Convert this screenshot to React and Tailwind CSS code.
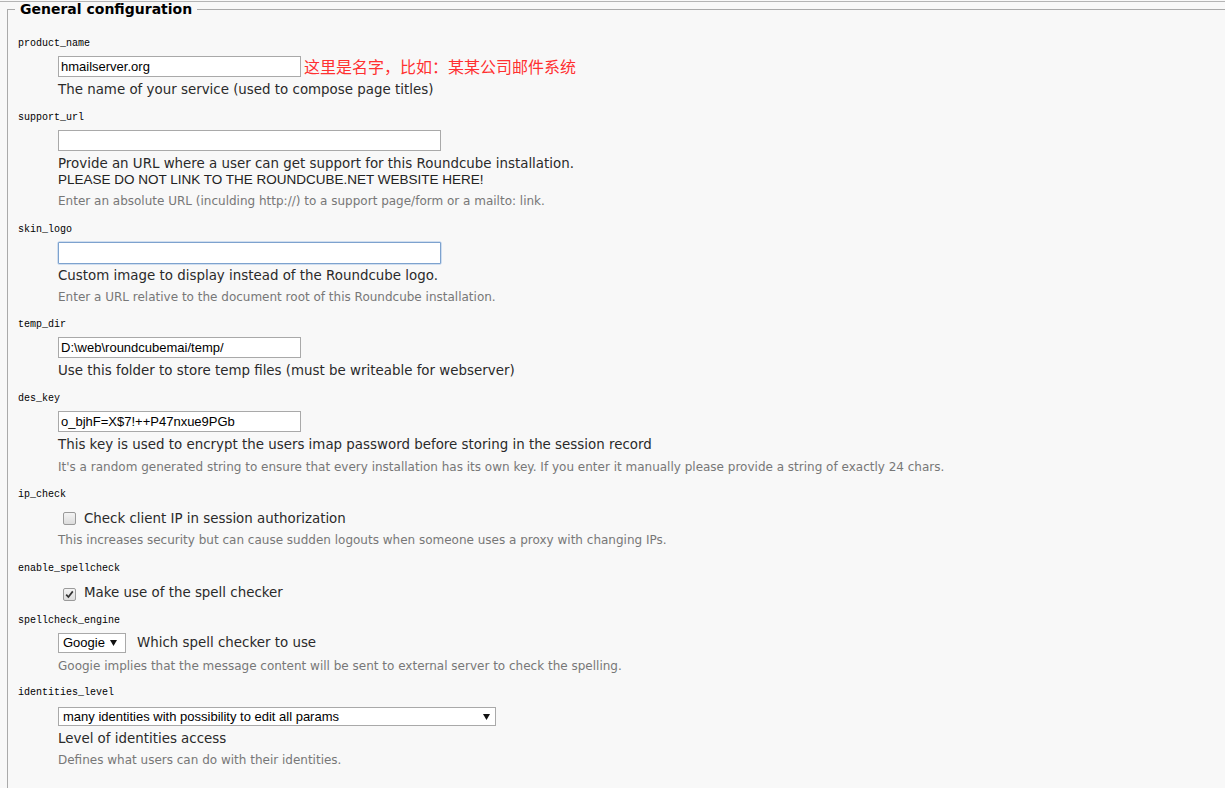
import React from "react";

const label = "block font-['Liberation_Mono',monospace] text-[10px] leading-[16px] text-black";
const desc = "font-['DejaVu_Sans',sans-serif] text-[13.4px] leading-[16px] text-[#2a2a2a]";
const hint = "font-['DejaVu_Sans',sans-serif] text-[12px] leading-[16px] text-[#777]";
const inputBox = "h-[21px] bg-white border border-[#a9a9a9] font-['Liberation_Sans',Arial,sans-serif] text-[13px] leading-[19px] text-black pl-[2px] whitespace-nowrap overflow-hidden";

function Checkbox({ checked }) {
  return (
    <span className="inline-flex items-center justify-center w-[13px] h-[13px] border border-[#9a9a9a] rounded-[2px] bg-gradient-to-b from-[#f4f4f4] to-[#dcdcdc]">
      {checked && (
        <svg width="9" height="9" viewBox="0 0 9 9">
          <path d="M1.2 4.6 L3.4 7 L7.8 1.4" fill="none" stroke="#333" strokeWidth="1.7" />
        </svg>
      )}
    </span>
  );
}

function Arrow() {
  return (
    <svg width="7" height="6" viewBox="0 0 7 6" className="shrink-0">
      <path d="M0 0 H7 L3.5 6 Z" fill="#111" />
    </svg>
  );
}

export default function App() {
  return (
    <div className="min-h-screen bg-[#f8f8f8] pt-px">
      <div className="h-px bg-[#b4b4b4]" />
      <fieldset className="ml-[7px] border-t border-l border-[#aaaaaa] pl-[10px] pb-[24px] min-h-[786px]">
        <legend className="-ml-[3px] px-[5px] font-['DejaVu_Sans',Verdana,sans-serif] font-bold text-[14px] leading-[14px] text-black">
          General configuration
        </legend>

        {/* product_name */}
        <div className="mt-[20px]">
          <span className={label}>product_name</span>
          <div className="ml-[40px]">
            <div className="mt-[4px] flex items-center">
              <div className={inputBox + " w-[243px]"}>hmailserver.org</div>
              <span className="ml-[3px] font-['Noto_Sans_CJK_SC',sans-serif] text-[16px] leading-[21px] text-[#ff3030]">
                这里是名字，比如：某某公司邮件系统
              </span>
            </div>
            <div className={desc + " mt-[5px]"}>The name of your service (used to compose page titles)</div>
          </div>
        </div>

        {/* support_url */}
        <div className="mt-[12px]">
          <span className={label}>support_url</span>
          <div className="ml-[40px]">
            <div className={inputBox + " mt-[4px] w-[383px]"}></div>
            <div className={desc + " mt-[5px]"}>Provide an URL where a user can get support for this Roundcube installation.</div>
            <div className="font-['Liberation_Sans',Arial,sans-serif] text-[13.5px] leading-[16px] text-[#222]">PLEASE DO NOT LINK TO THE ROUNDCUBE.NET WEBSITE HERE!</div>
            <div className={hint + " mt-[5px]"}>Enter an absolute URL (inculding http://) to a support page/form or a mailto: link.</div>
          </div>
        </div>

        {/* skin_logo */}
        <div className="mt-[13px]">
          <span className={label}>skin_logo</span>
          <div className="ml-[40px]">
            <div className="mt-[4px] h-[22px] w-[383px] bg-white border border-[#7da2ce] rounded-[1px] shadow-[0_0_0_0.5px_#a7c3e6]"></div>
            <div className={desc + " mt-[4px]"}>Custom image to display instead of the Roundcube logo.</div>
            <div className={hint + " mt-[5px]"}>Enter a URL relative to the document root of this Roundcube installation.</div>
          </div>
        </div>

        {/* temp_dir */}
        <div className="mt-[12px]">
          <span className={label}>temp_dir</span>
          <div className="ml-[40px]">
            <div className={inputBox + " mt-[4px] w-[243px]"}>D:\web\roundcubemai/temp/</div>
            <div className={desc + " mt-[5px]"}>Use this folder to store temp files (must be writeable for webserver)</div>
          </div>
        </div>

        {/* des_key */}
        <div className="mt-[12px]">
          <span className={label}>des_key</span>
          <div className="ml-[40px]">
            <div className={inputBox + " mt-[4px] w-[243px]"}>o_bjhF=X$7!++P47nxue9PGb</div>
            <div className={desc + " mt-[5px]"}>This key is used to encrypt the users imap password before storing in the session record</div>
            <div className={hint + " mt-[6px]"}>It's a random generated string to ensure that every installation has its own key. If you enter it manually please provide a string of exactly 24 chars.</div>
          </div>
        </div>

        {/* ip_check */}
        <div className="mt-[12px]">
          <span className={label}>ip_check</span>
          <div className="ml-[40px]">
            <div className="mt-[7px] h-[18px] flex items-center">
              <span className="ml-[5px]"><Checkbox /></span>
              <span className={desc + " ml-[8px]"}>Check client IP in session authorization</span>
            </div>
            <div className={hint + " mt-[4px]"}>This increases security but can cause sudden logouts when someone uses a proxy with changing IPs.</div>
          </div>
        </div>

        {/* enable_spellcheck */}
        <div className="mt-[13px]">
          <span className={label}>enable_spellcheck</span>
          <div className="ml-[40px]">
            <div className="mt-[7px] h-[18px] flex items-center">
              <span className="ml-[5px]"><Checkbox checked /></span>
              <span className={desc + " ml-[8px]"}>Make use of the spell checker</span>
            </div>
          </div>
        </div>

        {/* spellcheck_engine */}
        <div className="mt-[11px]">
          <span className={label}>spellcheck_engine</span>
          <div className="ml-[40px]">
            <div className="mt-[4px] flex items-center">
              <div className="h-[20px] w-[68px] bg-white border border-[#a9a9a9] flex items-center pl-[4px] pr-[8px] justify-between">
                <span className="font-['Liberation_Sans',Arial,sans-serif] text-[13px] leading-[18px] text-black">Googie</span>
                <Arrow />
              </div>
              <span className={desc + " ml-[11px]"}>Which spell checker to use</span>
            </div>
            <div className={hint + " mt-[5px]"}>Googie implies that the message content will be sent to external server to check the spelling.</div>
          </div>
        </div>

        {/* identities_level */}
        <div className="mt-[11px]">
          <span className={label}>identities_level</span>
          <div className="ml-[40px]">
            <div className="mt-[6px] h-[19px] w-[438px] bg-white border border-[#a9a9a9] flex items-center pl-[4px] pr-[5px] justify-between">
              <span className="font-['Liberation_Sans',Arial,sans-serif] text-[13px] leading-[17px] text-black">many identities with possibility to edit all params</span>
              <Arrow />
            </div>
            <div className={desc + " mt-[5px]"}>Level of identities access</div>
            <div className={hint + " mt-[5px]"}>Defines what users can do with their identities.</div>
          </div>
        </div>
      </fieldset>
    </div>
  );
}
